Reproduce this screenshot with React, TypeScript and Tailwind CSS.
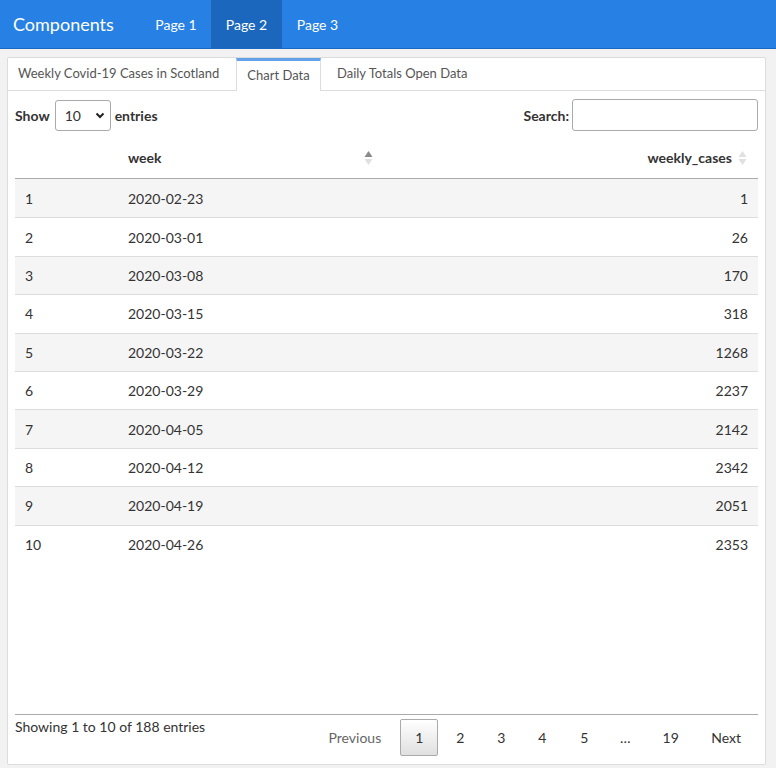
import React from "react";

const rows: [number, string, number][] = [
  [1, "2020-02-23", 1],
  [2, "2020-03-01", 26],
  [3, "2020-03-08", 170],
  [4, "2020-03-15", 318],
  [5, "2020-03-22", 1268],
  [6, "2020-03-29", 2237],
  [7, "2020-04-05", 2142],
  [8, "2020-04-12", 2342],
  [9, "2020-04-19", 2051],
  [10, "2020-04-26", 2353],
];

function SortIcon({ up }: { up: string }) {
  return (
    <svg width="9" height="16" viewBox="0 0 9 16" className="shrink-0">
      <path d="M4.5 1 L8.5 7 L0.5 7 Z" fill={up} />
      <path d="M0.5 9 L8.5 9 L4.5 15 Z" fill="#e0e0e0" />
    </svg>
  );
}

export default function App() {
  return (
    <div
      className="w-[776px] h-[768px] bg-[#f2f2f2] text-[#333] overflow-hidden"
      style={{ fontFamily: "Lato, 'Open Sans', sans-serif" }}
    >
      <nav className="h-[49px] bg-[#2780e3] border-b border-[#1967be] flex items-stretch">
        <div className="w-[141px] pl-[13px] flex items-center text-white text-[18px]">Components</div>
        <a className="w-[70px] flex items-center justify-center text-white text-[14px]">Page 1</a>
        <a className="w-[71px] flex items-center justify-center text-white text-[14px] bg-[#1a67bd]">Page 2</a>
        <a className="w-[71px] flex items-center justify-center text-white text-[14px]">Page 3</a>
      </nav>

      <div className="mx-[7px] mt-[8px] w-[759px] h-[708px] bg-white border border-[#dcdcdc] rounded-[2px] flex flex-col">
        <div className="h-[33px] border-b border-[#ddd] flex items-stretch shrink-0">
          <div className="w-[228px] pl-[10px] flex items-center text-[13px] text-[#555]">Weekly Covid-19 Cases in Scotland</div>
          <div className="w-[85px] -mb-px bg-white border-x border-[#ddd] border-t-[3px] border-t-[#63a2ea] flex items-center justify-center text-[13px] text-[#555]">Chart Data</div>
          <div className="pl-[16px] flex items-center text-[13px] text-[#555]">Daily Totals Open Data</div>
        </div>

        <div className="flex-1 flex flex-col px-[7px] pb-[8px]">
          <div className="flex items-center justify-between mt-[8px] h-[32px]">
            <div className="flex items-center text-[14px] font-bold">
              <span>Show</span>
              <div className="ml-[5px] mr-[4px] w-[56px] h-[31px] border border-[#aaa] rounded-[3px] flex items-center justify-between pl-[9px] pr-[5px] font-normal">
                <span>10</span>
                <svg width="10" height="7" viewBox="0 0 10 7">
                  <path d="M1.5 1.5 L5 5 L8.5 1.5" stroke="#222" strokeWidth="2" fill="none" />
                </svg>
              </div>
              <span>entries</span>
            </div>
            <div className="flex items-center text-[14px] font-bold">
              <span>Search:</span>
              <div className="ml-[3px] w-[186px] h-[32px] border border-[#aaa] rounded-[3px] bg-white" />
            </div>
          </div>

          <div className="flex-1 flex flex-col mt-[9px]">
            <div className="h-[39px] pb-[3px] border-b border-[#aaa] flex items-center text-[14px] font-bold">
              <div className="w-[103px]" />
              <div className="w-[255px] pl-[10px] flex items-center justify-between">
                <span>week</span>
                <SortIcon up="#8a8a8a" />
              </div>
              <div className="flex-1 flex items-center justify-end pr-[11px] gap-[6px]">
                <span>weekly_cases</span>
                <SortIcon up="#e0e0e0" />
              </div>
            </div>
            {rows.map(([i, w, c], idx) => (
              <div
                key={i}
                className={`h-[38.4px] flex items-center text-[14px] ${idx > 0 ? "border-t border-[#ddd]" : ""} ${idx % 2 === 0 ? "bg-[#f5f5f5]" : "bg-white"}`}
              >
                <div className="w-[103px] pl-[10px]">{i}</div>
                <div className="w-[255px] pl-[10px]">{w}</div>
                <div className="flex-1 text-right pr-[10px]">{c}</div>
              </div>
            ))}
          </div>

          <div className="border-t border-[#aaa] flex justify-between items-start">
            <div className="text-[14px] mt-[1px]">Showing 1 to 10 of 188 entries</div>
            <div className="flex items-center text-[14px] mt-[4px]">
              <span className="h-[37px] px-[16px] flex items-center text-[#666] border border-transparent">Previous</span>
              <span className="ml-[2px] h-[37px] w-[38px] flex items-center justify-center border border-[#aaa] rounded-[2px] bg-gradient-to-b from-white to-[#e0e0e0]">1</span>
              <span className="ml-[2px] h-[37px] w-[40px] flex items-center justify-center border border-transparent">2</span>
              <span className="ml-[1px] h-[37px] w-[40px] flex items-center justify-center border border-transparent">3</span>
              <span className="ml-[1px] h-[37px] w-[40px] flex items-center justify-center border border-transparent">4</span>
              <span className="ml-[2px] h-[37px] w-[40px] flex items-center justify-center border border-transparent">5</span>
              <span className="ml-[1px] h-[37px] w-[40px] flex items-center justify-center">…</span>
              <span className="ml-[2px] h-[37px] w-[47px] flex items-center justify-center border border-transparent">19</span>
              <span className="ml-[2px] h-[37px] pl-[14px] pr-[16px] flex items-center border border-transparent">Next</span>
            </div>
          </div>
        </div>
      </div>
    </div>
  );
}
